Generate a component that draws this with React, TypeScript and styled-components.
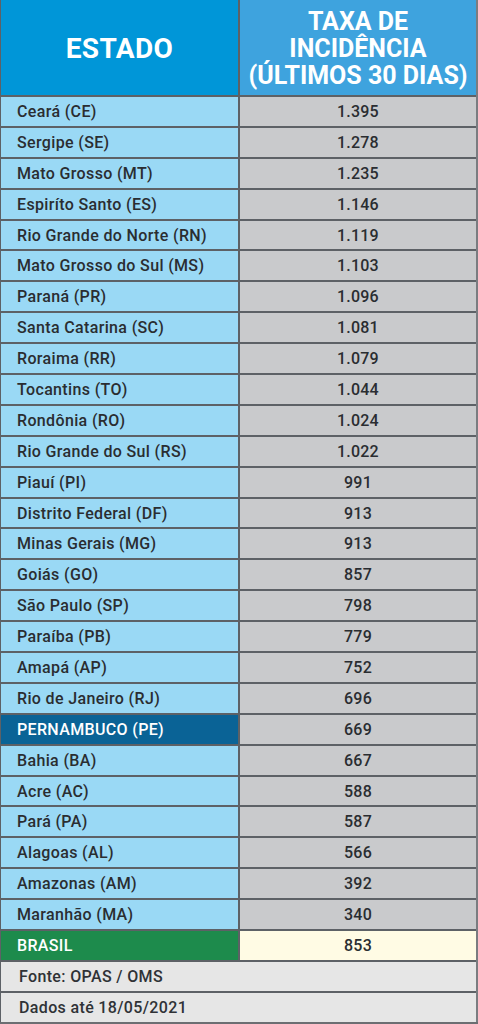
import { Fragment } from 'react';
import styled, { createGlobalStyle } from 'styled-components';

const GlobalStyle = createGlobalStyle`
  html, body {
    margin: 0;
    padding: 0;
    background: #ffffff;
  }
  body {
    font-family: Roboto, "Noto Sans", "Liberation Sans", sans-serif;
  }
`;

type Row = { name: string; value: string; kind?: 'highlight' | 'total' };

const rows: Row[] = [
  { name: 'Ceará (CE)', value: '1.395' },
  { name: 'Sergipe (SE)', value: '1.278' },
  { name: 'Mato Grosso (MT)', value: '1.235' },
  { name: 'Espiríto Santo (ES)', value: '1.146' },
  { name: 'Rio Grande do Norte (RN)', value: '1.119' },
  { name: 'Mato Grosso do Sul (MS)', value: '1.103' },
  { name: 'Paraná (PR)', value: '1.096' },
  { name: 'Santa Catarina (SC)', value: '1.081' },
  { name: 'Roraima (RR)', value: '1.079' },
  { name: 'Tocantins (TO)', value: '1.044' },
  { name: 'Rondônia (RO)', value: '1.024' },
  { name: 'Rio Grande do Sul (RS)', value: '1.022' },
  { name: 'Piauí (PI)', value: '991' },
  { name: 'Distrito Federal (DF)', value: '913' },
  { name: 'Minas Gerais (MG)', value: '913' },
  { name: 'Goiás (GO)', value: '857' },
  { name: 'São Paulo (SP)', value: '798' },
  { name: 'Paraíba (PB)', value: '779' },
  { name: 'Amapá (AP)', value: '752' },
  { name: 'Rio de Janeiro (RJ)', value: '696' },
  { name: 'PERNAMBUCO (PE)', value: '669', kind: 'highlight' },
  { name: 'Bahia (BA)', value: '667' },
  { name: 'Acre (AC)', value: '588' },
  { name: 'Pará (PA)', value: '587' },
  { name: 'Alagoas (AL)', value: '566' },
  { name: 'Amazonas (AM)', value: '392' },
  { name: 'Maranhão (MA)', value: '340' },
  { name: 'BRASIL', value: '853', kind: 'total' },
];

const Table = styled.div`
  width: 478px;
  display: grid;
  grid-template-columns: 237px 1fr;
  grid-auto-rows: 28.9px;
  grid-template-rows: 95px;
  column-gap: 2px;
  row-gap: 2px;
  background: #5d6166;
  border-left: 1px solid #5d6166;
  border-right: 2px solid #7a7c80;
  box-sizing: border-box;
`;

const HeadCell = styled.div<{ $light?: boolean }>`
  background: ${(p) => (p.$light ? '#3ea3de' : '#0096d8')};
  color: #ffffff;
  display: flex;
  align-items: center;
  justify-content: center;
  text-align: center;
  font-weight: 700;
  font-size: ${(p) => (p.$light ? '25px' : '28px')};
  line-height: 27px;
  letter-spacing: ${(p) => (p.$light ? '0px' : '0.4px')};
  padding-top: 2px;
`;

const NameCell = styled.div<{ $kind?: Row['kind'] }>`
  background: ${(p) =>
    p.$kind === 'highlight' ? '#0a6396' : p.$kind === 'total' ? '#1d8b4c' : '#9ad9f5'};
  color: ${(p) => (p.$kind ? '#ffffff' : '#2a2d31')};
  display: flex;
  align-items: center;
  padding-left: 16px;
  font-size: 16px;
  font-weight: 500;
  letter-spacing: 0.35px;
`;

const ValueCell = styled.div<{ $kind?: Row['kind'] }>`
  background: ${(p) => (p.$kind === 'total' ? '#fffbe4' : '#c9cacc')};
  color: #2a2d31;
  display: flex;
  align-items: center;
  justify-content: center;
  font-size: 16px;
  font-weight: 500;
  letter-spacing: 0.2px;
`;

const NoteCell = styled.div`
  grid-column: 1 / -1;
  background: #e6e6e6;
  color: #2f3236;
  display: flex;
  align-items: center;
  padding-left: 18px;
  font-size: 16px;
  font-weight: 500;
  letter-spacing: 0.35px;
`;

const Bottom = styled.div`
  width: 478px;
  height: 2px;
  background: #6c6e72;
`;

export default function App() {
  return (
    <>
      <GlobalStyle />
      <Table>
        <HeadCell>ESTADO</HeadCell>
        <HeadCell $light>
          TAXA DE
          <br />
          INCIDÊNCIA
          <br />
          (ÚLTIMOS 30 DIAS)
        </HeadCell>
        {rows.map((r) => (
          <Fragment key={r.name}>
            <NameCell $kind={r.kind}>{r.name}</NameCell>
            <ValueCell $kind={r.kind}>{r.value}</ValueCell>
          </Fragment>
        ))}
        <NoteCell>Fonte: OPAS / OMS</NoteCell>
        <NoteCell>Dados até 18/05/2021</NoteCell>
      </Table>
      <Bottom />
    </>
  );
}
